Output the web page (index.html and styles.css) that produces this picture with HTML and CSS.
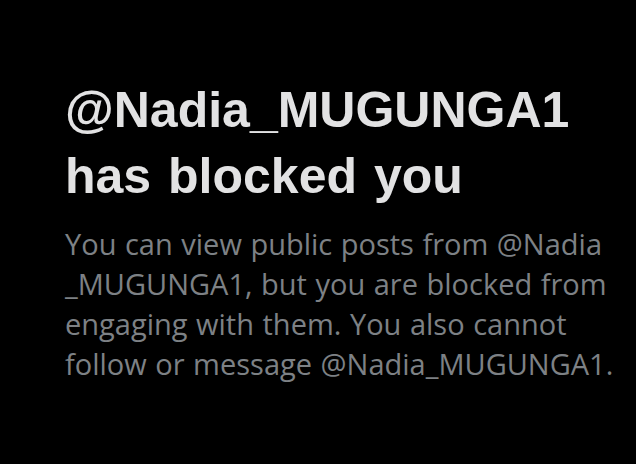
FILE: index.html
```html
<!DOCTYPE html>
<html lang="en">
<head>
	<meta charset="UTF-8">
	<title>Blocked</title>
	<link rel="stylesheet" href="styles.css">
</head>
<body>
<div class="blocked">
	<h1 class="blocked_title">@Nadia_MUGUNGA1<br>has blocked you</h1>
	<p class="blocked_text">You can view public posts from @Nadia<br>_MUGUNGA1, but you are blocked from<br>engaging with them. You also cannot<br>follow or message @Nadia_MUGUNGA1.</p>
</div>
</body>
</html>
```

FILE: styles.css
```css
body{
	margin: 0;
	background: #000;
}
.blocked{
	padding: 77px 0 0 65px;
}
.blocked_title{
	margin: 0;
	color: #e2e2e3;
	font-family: 'Liberation Sans', Arial, sans-serif;
	font-weight: bold;
	font-size: 50px;
	line-height: 66px;
	word-spacing: 3px;
}
.blocked_text{
	margin: 15px 0 0;
	color: #7d8185;
	font-family: 'Open Sans', sans-serif;
	font-size: 29px;
	line-height: 40px;
	word-spacing: 1px;
	white-space: nowrap;
}
```
